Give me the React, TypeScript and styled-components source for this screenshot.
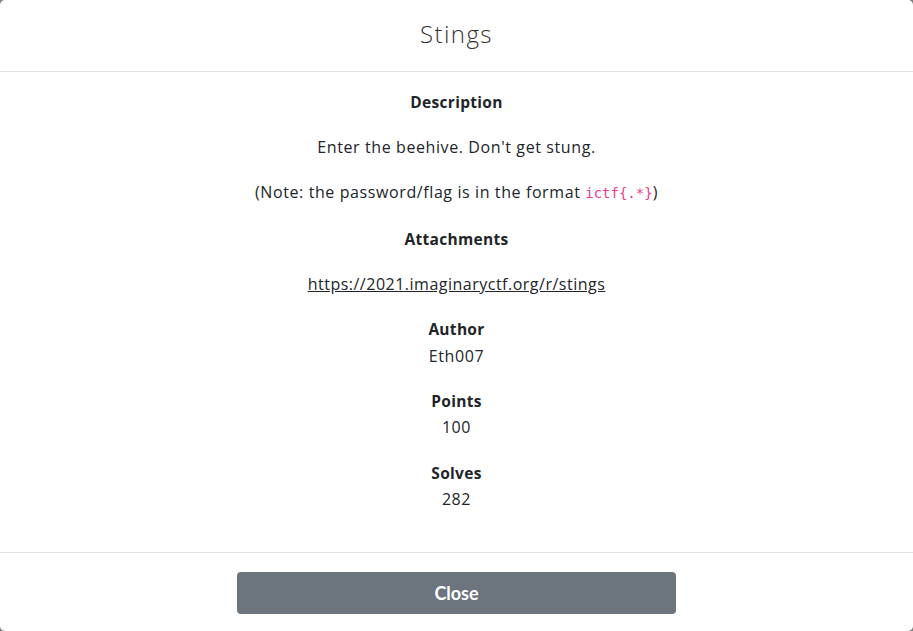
import React from "react";
import styled, { createGlobalStyle } from "styled-components";

const Global = createGlobalStyle`
  html, body { margin: 0; padding: 0; background: #7f7f7f; }
  #root { min-height: 631px; }
`;

const Modal = styled.div`
  width: 913px;
  height: 631px;
  background: #fff;
  border-radius: 5px;
  display: flex;
  flex-direction: column;
  font-family: "Open Sans", Lato, sans-serif;
  color: #212529;
  overflow: hidden;
`;

const Header = styled.header`
  height: 72px;
  border-bottom: 1px solid #dee2e6;
  display: flex;
  align-items: center;
  justify-content: center;
  padding-bottom: 5px;
  box-sizing: border-box;
`;

const Title = styled.h3`
  margin: 0;
  font-family: "Open Sans", Lato, sans-serif;
  font-weight: 300;
  font-size: 24px;
  color: #333;
  letter-spacing: 1.4px;
`;

const Body = styled.main`
  flex: 1;
  padding: 17px 16px 0;
  text-align: center;
  font-size: 16px;
  line-height: 26.6px;
  border-bottom: 1px solid #dee2e6;
`;

const Block = styled.div`
  margin-bottom: 18.6px;
`;

const Heading = styled.div`
  font-weight: 700;
  font-size: 15.5px;
  letter-spacing: 0.3px;
`;

const Text = styled.div`
  letter-spacing: 0.6px;
`;

const Code = styled.code`
  font-family: "DejaVu Sans Mono", "Liberation Mono", monospace;
  font-size: 14px;
  letter-spacing: 0;
  color: #e83e8c;
`;

const Link = styled.a`
  color: #212529;
  text-decoration: underline;
  letter-spacing: 0.5px;
`;

const Footer = styled.footer`
  height: 78px;
  display: flex;
  justify-content: center;
  padding-top: 19px;
  box-sizing: border-box;
`;

const Button = styled.button`
  width: 439px;
  height: 42px;
  background: #6c757d;
  color: #fff;
  border: none;
  border-radius: 4px;
  font-family: Lato, sans-serif;
  font-weight: 700;
  font-size: 18px;
`;

export default function App() {
  return (
    <>
      <Global />
      <Modal>
        <Header>
          <Title>Stings</Title>
        </Header>
        <Body>
          <Block><Heading>Description</Heading></Block>
          <Block><Text>Enter the beehive. Don't get stung.</Text></Block>
          <Block>
            <Text>
              (Note: the password/flag is in the format <Code>ictf{"{.*}"}</Code>)
            </Text>
          </Block>
          <Block><Heading>Attachments</Heading></Block>
          <Block>
            <Link href="#">https://2021.imaginaryctf.org/r/stings</Link>
          </Block>
          <Block>
            <Heading>Author</Heading>
            <Text>Eth007</Text>
          </Block>
          <Block>
            <Heading>Points</Heading>
            <Text>100</Text>
          </Block>
          <Block>
            <Heading>Solves</Heading>
            <Text>282</Text>
          </Block>
        </Body>
        <Footer>
          <Button>Close</Button>
        </Footer>
      </Modal>
    </>
  );
}
